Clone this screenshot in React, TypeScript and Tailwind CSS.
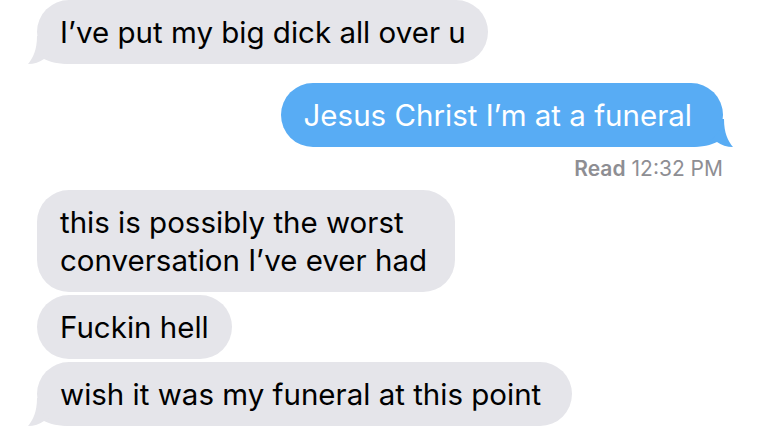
import React from "react";

const GRAY = "#e5e5ea";
const BLUE = "#58acf4";

const LeftTail = () => (
  <svg
    className="absolute bottom-0 left-[-9px]"
    width="44"
    height="28"
    viewBox="0 0 44 28"
  >
    <path
      d="M9 0 C9 14 5 22 0 28 C6 28 12 26 16 23 C22 26 30 28 44 28 L44 0 Z"
      fill={GRAY}
    />
  </svg>
);

const RightTail = () => (
  <svg
    className="absolute bottom-0 right-[-10px]"
    width="44"
    height="28"
    viewBox="0 0 44 28"
  >
    <path
      d="M35 0 C35 14 39 22 44 28 C38 28 32 26 28 23 C22 26 14 28 0 28 L0 0 Z"
      fill={BLUE}
    />
  </svg>
);

const Received = ({
  children,
  tail,
  className = "pr-[27px]",
}: {
  children: React.ReactNode;
  tail?: boolean;
  className?: string;
}) => (
  <div className="relative w-fit">
    {tail && <LeftTail />}
    <div
      className={`relative rounded-[32px] bg-[#e5e5ea] py-[13px] pl-[23px] text-[29.5px] leading-[38px] text-black ${className}`}
    >
      {children}
    </div>
  </div>
);

export default function App() {
  return (
    <div
      className="flex h-[439px] w-[760px] flex-col overflow-hidden bg-white px-[37px]"
      style={{ fontFamily: "Inter, 'Noto Sans', sans-serif" }}
    >
      <Received tail className="pr-[22px]">
        I’ve put my big dick all over u
      </Received>

      <div className="mt-[19px] flex justify-end">
        <div className="relative w-fit">
          <RightTail />
          <div className="relative rounded-[32px] bg-[#58acf4] py-[13px] pl-[23px] pr-[31px] text-[29.5px] leading-[38px] text-white">
            Jesus Christ I’m at a funeral
          </div>
        </div>
      </div>

      <div className="mt-[10px] flex justify-end text-[21px] leading-[24px] text-[#8e8e93]">
        <span className="font-semibold">Read</span>
        <span className="ml-[6px]">12:32 PM</span>
      </div>

      <div className="mt-[9px] flex flex-col gap-[3px]">
        <Received className="pr-[28px]">
          this is possibly the worst
          <br />
          conversation I’ve ever had
        </Received>
        <Received className="pr-[23px]">Fuckin hell</Received>
        <Received tail className="pr-[31px]">
          wish it was my funeral at this point
        </Received>
      </div>
    </div>
  );
}
